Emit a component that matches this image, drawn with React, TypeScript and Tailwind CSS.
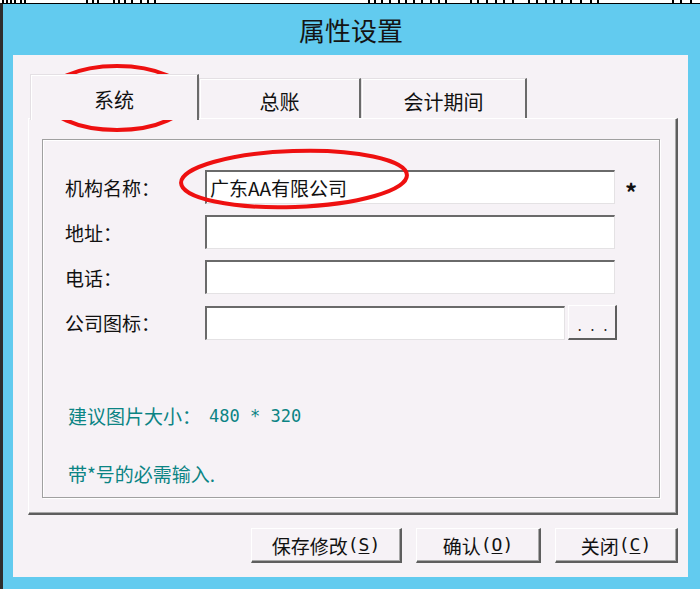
import React from "react";

const ticks = [2, 6, 10, 14, 20, 24, 86, 92, 97, 113, 118, 124, 131, 140, 147, 154, 368, 374, 381, 389, 398, 405, 413, 421, 430, 438, 445, 470, 477, 486, 495, 503, 512, 528, 536, 545, 553, 561, 570, 580, 590, 597, 672, 680, 690];

const mono = "font-['DejaVu_Sans_Mono',monospace]";

function Tab({ label, selected, w }: { label: string; selected?: boolean; w: string }) {
  return (
    <div
      className={
        (selected
          ? "relative z-10 h-[46px] ml-[2px] "
          : "mt-[4px] h-[40px] ") +
        w +
        " bg-[#f6f2f6] border-l border-t border-l-[#e4e0e4] border-t-[#e4e0e4] border-r-2 border-r-[#6a6a6a] shadow-[inset_1px_1px_0_#ffffff] flex items-center justify-center text-[20px] text-[#111] leading-none"
      }
    >
      <span className={selected ? "mt-[4px]" : "mt-[6px]"}>{label}</span>
    </div>
  );
}

function Input({ w, children }: { w: string; children?: React.ReactNode }) {
  return (
    <div
      className={
        w +
        " h-[34px] bg-white border-t-2 border-l-2 border-t-[#6a6a6a] border-l-[#6a6a6a] border-r border-b border-r-[#e4e2e4] border-b-[#e4e2e4] flex items-center pl-[3px] text-[19px] text-[#111] leading-none"
      }
    >
      {children}
    </div>
  );
}

function Btn({ w, children }: { w: string; children: React.ReactNode }) {
  return (
    <div
      className={
        w +
        " h-[35px] bg-[#f6f2f6] border-l border-t border-l-[#ffffff] border-t-[#ffffff] border-r-2 border-b-2 border-r-[#5e5e5e] border-b-[#5e5e5e] shadow-[inset_-1px_-1px_0_#a8a8a8] flex items-center justify-center text-[19px] text-[#111] leading-none"
      }
    >
      {children}
    </div>
  );
}

function Acc({ k }: { k: string }) {
  return (
    <span className={mono + " text-[18px]"}>
      (<span className="underline underline-offset-2">{k}</span>)
    </span>
  );
}

export default function App() {
  return (
    <div className="w-[700px] h-[589px] relative overflow-hidden bg-[#62cbef] flex flex-col font-['Noto_Sans_CJK_SC','Noto_Sans',sans-serif]">
      {/* top strip */}
      <div className="h-[3px] bg-white relative shrink-0">
        {ticks.map((x, i) => (
          <div key={i} className="absolute top-0 h-[3px] w-[2px] bg-black" style={{ left: x }} />
        ))}
      </div>
      <div className="flex-1 flex flex-col border-t border-t-black border-l-[3px] border-l-[#2e2e2e]">
        {/* title */}
        <div className="h-[51px] shrink-0 flex items-center justify-center text-[26px] text-[#141414] leading-none">
          <span className="ml-[-1px]">属性设置</span>
        </div>
        {/* content */}
        <div className="ml-[10px] mr-[12px] h-[522px] bg-[#f6f2f6] flex flex-col pt-[19px]">
          {/* tabs */}
          <div className="flex items-start ml-[15px] h-[46px]">
            <Tab label="系统" selected w="w-[169px]" />
            <Tab label="总账" w="w-[162px]" />
            <Tab label="会计期间" w="w-[166px]" />
          </div>
          {/* panel */}
          <div className="-mt-[2px] ml-[15px] w-[650px] h-[397px] border-l border-t border-l-[#ffffff] border-t-[#ffffff] border-r-2 border-b-2 border-r-[#5e5e5e] border-b-[#5e5e5e] shadow-[inset_-1px_-1px_0_#a8a8a8] pl-[13px] pt-[20px]">
            <div className="w-[618px] h-[359px] border border-[#a0a0a0] shadow-[1px_1px_0_#ffffff,inset_1px_1px_0_#ffffff] flex flex-col pl-[22px] pt-[30px] text-[#111]">
              <div className="flex flex-col gap-[11px]">
                <div className="flex items-center h-[34px]">
                  <div className="w-[140px] text-[19px] leading-none">机构名称：</div>
                  <Input w="w-[410px]">广东AA有限公司</Input>
                  <div className="ml-[10px] text-[24px] font-bold leading-none mt-[10px]">*</div>
                </div>
                <div className="flex items-center h-[34px]">
                  <div className="w-[140px] text-[19px] leading-none">地址：</div>
                  <Input w="w-[410px]" />
                </div>
                <div className="flex items-center h-[34px]">
                  <div className="w-[140px] text-[19px] leading-none">电话：</div>
                  <Input w="w-[410px]" />
                </div>
                <div className="flex items-center h-[35px]">
                  <div className="w-[140px] text-[19px] leading-none">公司图标：</div>
                  <Input w="w-[360px]" />
                  <div className="ml-[3px] w-[49px] h-[35px] bg-[#f6f2f6] border-l border-t border-l-white border-t-white border-r-2 border-b-2 border-r-[#5e5e5e] border-b-[#5e5e5e] flex items-end justify-center pb-[6px] text-[14px] leading-none text-[#222]">
                    <span className="flex gap-[9px] ml-[1px]">
                      <span>.</span>
                      <span>.</span>
                      <span>.</span>
                    </span>
                  </div>
                </div>
              </div>
              <div className="mt-[66px] ml-[3px] text-[19px] leading-[20px] text-[#0b8484] flex items-center">
                <span>建议图片大小：</span>
                <span className={mono + " text-[17px] ml-[8px]"}>480 * 320</span>
              </div>
              <div className="mt-[38px] ml-[3px] text-[19px] leading-[20px] text-[#0b8484]">
                带*号的必需输入.
              </div>
            </div>
          </div>
          {/* buttons */}
          <div className="ml-[15px] w-[650px] mt-[13px] flex justify-end gap-[14px]">
            <Btn w="w-[151px]">
              保存修改<Acc k="S" />
            </Btn>
            <Btn w="w-[125px]">
              确认<Acc k="O" />
            </Btn>
            <Btn w="w-[123px]">
              关闭<Acc k="C" />
            </Btn>
          </div>
        </div>
      </div>
      {/* annotation ellipses */}
      <svg className="absolute left-0 top-0 pointer-events-none" width="700" height="589">
        <ellipse cx="117" cy="98" rx="71" ry="32" fill="none" stroke="#ee1010" strokeWidth="4" />
        <ellipse cx="294" cy="179" rx="113" ry="28" fill="none" stroke="#ee1010" strokeWidth="4" transform="rotate(-2 294 179)" />
      </svg>
    </div>
  );
}
